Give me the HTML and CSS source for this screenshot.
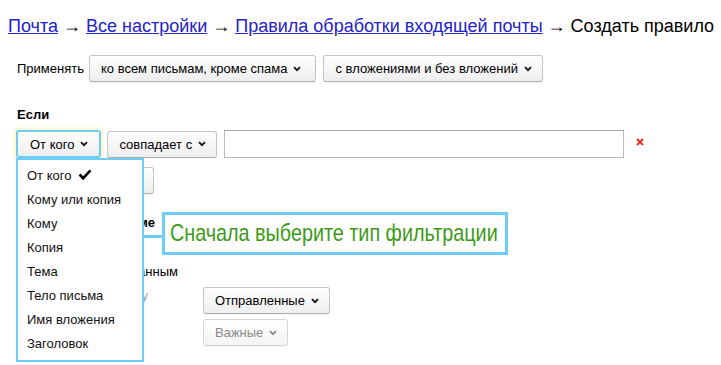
FILE: index.html
```html
<!DOCTYPE html>
<html lang="ru">
<head>
<meta charset="utf-8">
<title>Создать правило</title>
<link rel="stylesheet" href="styles.css">
</head>
<body>
<div class="page">
  <nav class="crumbs">
    <a href="#">Почта</a> → <a href="#">Все настройки</a> → <a href="#">Правила обработки входящей почты</a> → <span>Создать правило</span>
  </nav>

  <div class="apply-row">
    <span class="apply-label">Применять</span>
    <button class="btn btn-wide">ко всем письмам, кроме спама <svg class="chev" viewBox="0 0 8 6"><polyline points="1,1.2 4,4.2 7,1.2"/></svg></button>
    <button class="btn">с вложениями и без вложений <svg class="chev" viewBox="0 0 8 6"><polyline points="1,1.2 4,4.2 7,1.2"/></svg></button>
  </div>

  <h3 class="section-title">Если</h3>

  <div class="cond-row">
    <div class="select-wrap">
      <button class="btn btn-active">От кого <svg class="chev" viewBox="0 0 8 6"><polyline points="1,1.2 4,4.2 7,1.2"/></svg></button>
      <ul class="dropdown">
        <li class="dd-item">От кого <svg class="check" viewBox="0 0 14 12"><path d="M0.6 6.4 L2.6 4.4 L5.1 7.2 L11.6 0.4 L13.4 2.2 L5.1 11.2 Z"/></svg></li>
        <li class="dd-item">Кому или копия</li>
        <li class="dd-item">Кому</li>
        <li class="dd-item">Копия</li>
        <li class="dd-item">Тема</li>
        <li class="dd-item">Тело письма</li>
        <li class="dd-item">Имя вложения</li>
        <li class="dd-item">Заголовок</li>
      </ul>
      <div class="callout"><span class="callout-text">Сначала выберите тип фильтрации</span></div>
    </div>
    <button class="btn">совпадает с <svg class="chev" viewBox="0 0 8 6"><polyline points="1,1.2 4,4.2 7,1.2"/></svg></button>
    <input class="field" type="text">
    <svg class="remove" viewBox="0 0 8 8"><path d="M1 1 L7 7 M7 1 L1 7"/></svg>
  </div>

  <div class="add-row">
    <button class="btn btn-add">Добавить условие</button>
  </div>

  <h3 class="section-title action-title"><span class="action-title-text">Действия в системе</span></h3>

  <div class="action-line"><span class="action-line-text">Пометить прочитанным</span></div>

  <div class="action-row">
    <span class="action-label">Положить в папку</span>
    <button class="btn">Отправленные <svg class="chev" viewBox="0 0 8 6"><polyline points="1,1.2 4,4.2 7,1.2"/></svg></button>
  </div>
  <div class="action-row action-row-tight">
    <span class="action-label action-label-empty"></span>
    <button class="btn btn-disabled" disabled>Важные <svg class="chev" viewBox="0 0 8 6"><polyline points="1,1.2 4,4.2 7,1.2"/></svg></button>
  </div>
</div>
</body>
</html>
```

FILE: styles.css
```css
* { box-sizing: border-box; }

body {
  margin: 0;
  background: #fff;
  color: #000;
  font-family: "Liberation Sans", Arial, sans-serif;
  font-size: 13px;
}

.page {
  padding: 15px 0 19px 17px;
}

.crumbs {
  margin-left: -9px;
  font-size: 18px;
  line-height: 22px;
  white-space: nowrap;
}
.crumbs a { color: #2323c8; }

.apply-row {
  display: flex;
  align-items: center;
  gap: 7px;
  margin-top: 18px;
}
.apply-label { margin-right: -2px; }

.btn {
  display: inline-flex;
  align-items: center;
  gap: 6px;
  height: 27px;
  padding: 0 10px 0 11px;
  border: 1px solid #c4c4c4;
  border-bottom-color: #aeaeae;
  border-radius: 3px;
  background: linear-gradient(#ffffff, #eeeeee);
  box-shadow: 0 1px 0 rgba(0,0,0,0.04);
  color: #000;
  font: 13px "Liberation Sans", Arial, sans-serif;
  white-space: nowrap;
  cursor: pointer;
}
.btn-wide { padding-right: 14px; }

.chev {
  width: 8px;
  height: 6px;
  fill: none;
  stroke: #111;
  stroke-width: 1.8;
  flex: none;
}

.section-title {
  margin: 25px 0 0;
  font-size: 13px;
  line-height: 16px;
  font-weight: bold;
}

.cond-row {
  display: flex;
  align-items: center;
  gap: 6px;
  margin-top: 7px;
  margin-left: -1px;
}

.select-wrap { position: relative; }

.btn-active {
  height: 28px;
  padding: 0 11px 0 12px;
  border: 2px solid #6ccdf7;
  box-shadow: 0 0 4px 1px rgba(255, 214, 60, 0.45);
}

.dropdown {
  position: absolute;
  left: 0;
  top: 28px;
  z-index: 5;
  width: 128px;
  margin: 0;
  padding: 4px 0 4px 9px;
  list-style: none;
  background: #fff;
  border: 2px solid #6ccdf7;
}
.dd-item {
  display: flex;
  align-items: center;
  gap: 7px;
  height: 24px;
  line-height: 24px;
  white-space: nowrap;
  color: #111;
}
.check {
  width: 14px;
  height: 12px;
  fill: #000;
  margin-top: -2px;
}

.callout {
  position: absolute;
  left: 146px;
  top: 82px;
  z-index: 5;
  width: 346px;
  height: 43px;
  padding: 0 0 0 5px;
  border: 3px solid #6ccdf7;
  background: #fff;
  color: #3b9b16;
  font-size: 24px;
  line-height: 35px;
  white-space: nowrap;
}
.callout-text {
  display: inline-block;
  transform: scaleX(0.824);
  transform-origin: 0 50%;
}
.callout::before {
  content: "";
  position: absolute;
  left: -21px;
  top: 20px;
  width: 18px;
  height: 3px;
  background: #6ccdf7;
}

.field {
  width: 400px;
  height: 28px;
  margin-left: 1px;
  border: 1px solid #b9b9b9;
  border-top-color: #a9a9a9;
  background: #fff;
}

.remove {
  width: 8px;
  height: 8px;
  margin-left: 6px;
  margin-top: -4px;
  stroke: #f0302a;
  stroke-width: 2;
}

.add-row { margin-top: 9px; }
.btn-add { width: 137px; }

.action-title { margin-top: 21px; }
.action-title-text {
  display: inline-block;
  width: 138px;
  text-align: right;
  white-space: nowrap;
}

.action-line {
  margin-top: 33px;
  line-height: 16px;
}
.action-line-text {
  display: inline-block;
  width: 161px;
  text-align: right;
  white-space: nowrap;
}

.action-row {
  display: flex;
  align-items: flex-start;
  margin-top: 7px;
}
.action-row-tight { margin-top: 5px; }
.action-label {
  width: 131px;
  margin-right: 55px;
  flex: none;
  line-height: 16px;
  padding-top: 1px;
  text-align: right;
  white-space: nowrap;
  color: #9aa3b0;
}

.btn-disabled {
  border-color: #d6d6d6;
  background: linear-gradient(#ffffff, #f4f4f4);
  color: #8a8a8a;
  cursor: default;
}
.btn-disabled .chev { stroke: #888; }
```
